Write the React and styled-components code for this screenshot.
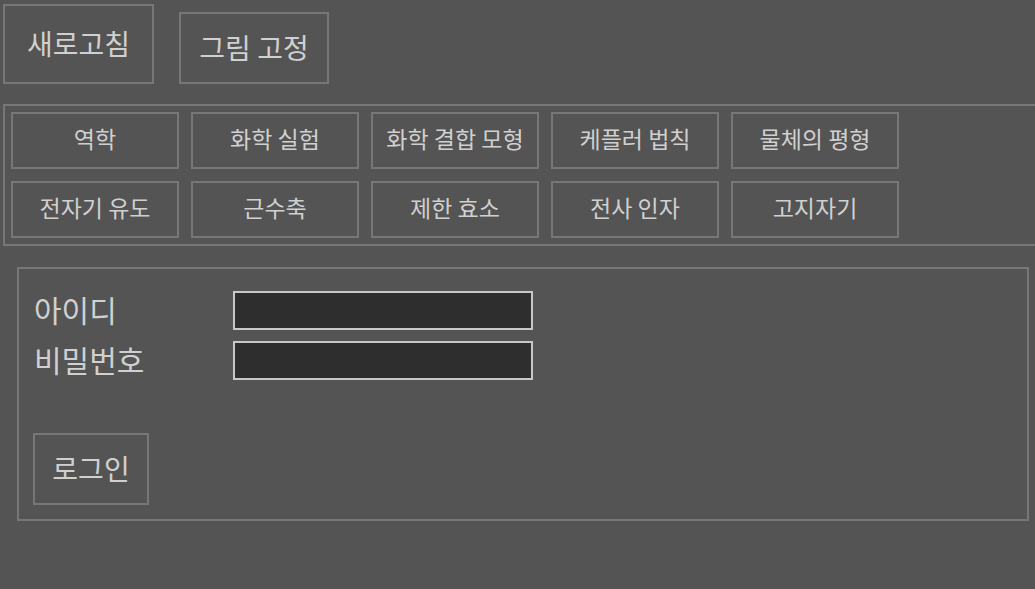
import React from "react"
import styled, { createGlobalStyle } from "styled-components"

const GlobalStyle = createGlobalStyle`
  html, body {
    margin: 0;
    padding: 0;
    background-color: #545454;
    overflow: hidden;
  }
  body {
    font-family: "Noto Sans CJK KR", "Noto Sans", sans-serif;
    color: #d0d0d0;
  }
`

const Page = styled.div`
  width: 1035px;
  height: 589px;
  padding: 4px 0 0 3px;
  box-sizing: border-box;
`

const TopBar = styled.div`
  display: flex;
  align-items: flex-end;
  gap: 25px;
`

const TopButton = styled.button`
  display: flex;
  align-items: center;
  justify-content: center;
  box-sizing: border-box;
  width: ${(p) => p.$w}px;
  height: ${(p) => p.$h}px;
  padding: 0 0 3px 0;
  background: transparent;
  border: 2px solid #777777;
  color: #d0d0d0;
  font-family: inherit;
  font-size: 28px;
  white-space: nowrap;
`

const TopicPanel = styled.div`
  margin-top: 20px;
  width: 1040px;
  box-sizing: border-box;
  border: 2px solid #777777;
  padding: 6px;
  display: grid;
  grid-template-columns: repeat(5, 168px);
  gap: 12px;
`

const TopicButton = styled.button`
  display: flex;
  align-items: center;
  justify-content: center;
  box-sizing: border-box;
  height: 57px;
  padding: 0 0 5px 0;
  background: transparent;
  border: 2px solid #777777;
  color: #d0d0d0;
  font-family: inherit;
  font-size: 23px;
  white-space: nowrap;
`

const LoginBox = styled.form`
  margin: 21px 0 0 14px;
  width: 1012px;
  height: 254px;
  box-sizing: border-box;
  border: 2px solid #777777;
  padding: 22px 14px 14px 14px;
  display: flex;
  flex-direction: column;
  justify-content: space-between;
  align-items: flex-start;
`

const FieldGrid = styled.div`
  display: grid;
  grid-template-columns: 200px 300px;
  row-gap: 11px;
  align-items: center;
`

const Label = styled.label`
  padding: 0 0 2px 1px;
  font-size: 30px;
  line-height: 37px;
  color: #d0d0d0;
`

const Input = styled.input`
  box-sizing: border-box;
  width: 300px;
  height: 39px;
  margin: 0;
  background: #2e2e2e;
  border: 2px solid #c8c8c8;
  outline: none;
  color: #d0d0d0;
`

const topics = [
  "역학",
  "화학 실험",
  "화학 결합 모형",
  "케플러 법칙",
  "물체의 평형",
  "전자기 유도",
  "근수축",
  "제한 효소",
  "전사 인자",
  "고지자기",
]

const App = () => {
  return (
    <Page>
      <GlobalStyle />
      <TopBar>
        <TopButton $w={151} $h={80}>새로고침</TopButton>
        <TopButton $w={150} $h={72}>그림 고정</TopButton>
      </TopBar>

      <TopicPanel>
        {topics.map((t) => (
          <TopicButton key={t}>{t}</TopicButton>
        ))}
      </TopicPanel>

      <LoginBox onSubmit={(e) => e.preventDefault()}>
        <FieldGrid>
          <Label htmlFor="userId">아이디</Label>
          <Input type="text" id="userId" />
          <Label htmlFor="userPw">비밀번호</Label>
          <Input type="password" id="userPw" />
        </FieldGrid>
        <TopButton type="submit" $w={116} $h={72}>로그인</TopButton>
      </LoginBox>
    </Page>
  )
}

export default App
